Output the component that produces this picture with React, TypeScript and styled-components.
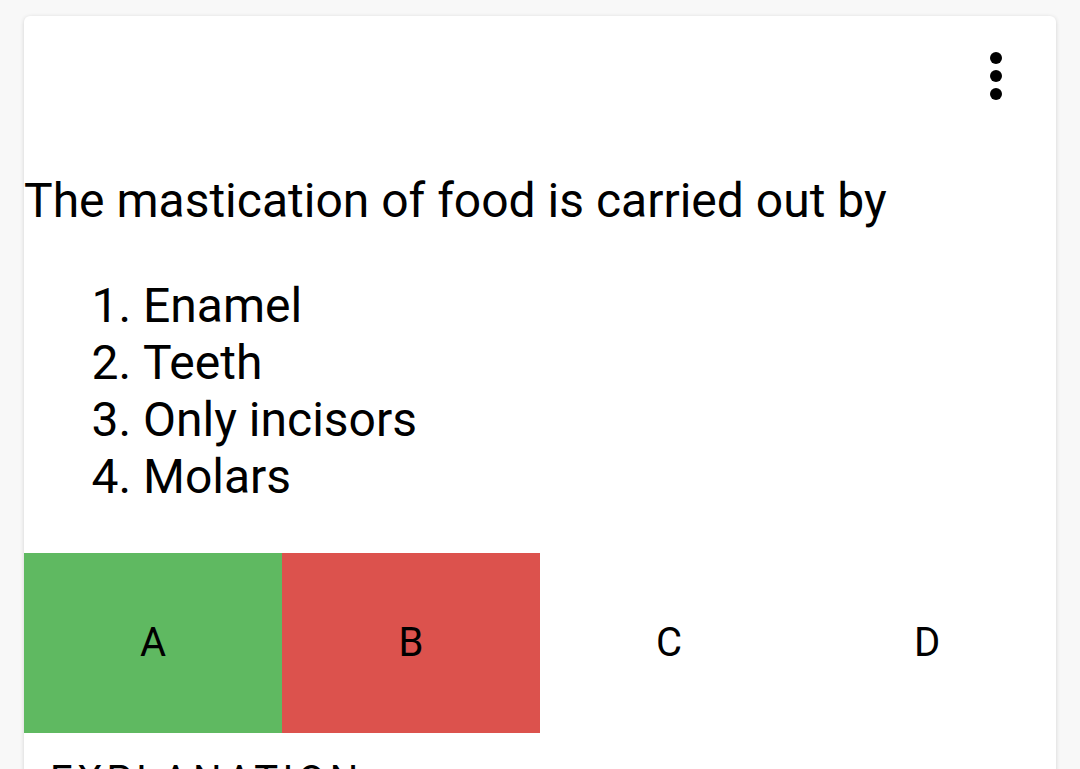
import React from "react";
import styled, { createGlobalStyle } from "styled-components";

const GlobalStyle = createGlobalStyle`
  html, body {
    margin: 0;
    padding: 0;
    background: #f8f8f8;
    font-family: Roboto, "Noto Sans", "Liberation Sans", sans-serif;
    color: #000;
  }
  * { box-sizing: border-box; }
`;

const Page = styled.div`
  padding: 16px 24px 0;
  height: 769px;
  overflow: hidden;
`;

const Card = styled.div`
  background: #fff;
  border-radius: 6px;
  box-shadow: 0 1px 4px rgba(0, 0, 0, 0.16);
  overflow: hidden;
`;

const Header = styled.div`
  display: flex;
  justify-content: flex-end;
  padding: 24px 24px 12px;
`;

const MenuButton = styled.button`
  width: 72px;
  height: 72px;
  padding: 0;
  border: none;
  background: transparent;
  display: flex;
  align-items: center;
  justify-content: center;
`;

const Question = styled.p`
  margin: 48px 0;
  font-size: 48px;
  line-height: 57px;
`;

const Options = styled.ol`
  margin: 0 0 48px;
  padding-left: 119px;
  font-size: 48px;
  line-height: 57px;
`;

const AnswerRow = styled.div`
  display: grid;
  grid-template-columns: repeat(4, 1fr);
  height: 180px;
`;

const Answer = styled.div<{ $state?: "correct" | "wrong" }>`
  display: flex;
  align-items: center;
  justify-content: center;
  font-size: 40px;
  padding-bottom: 2px;
  background: ${(p) =>
    p.$state === "correct" ? "#5fb961" : p.$state === "wrong" ? "#dc524d" : "#fff"};
`;

const Explanation = styled.div`
  padding: 24px 26px;
  font-size: 40px;
  line-height: normal;
  letter-spacing: 0.11em;
  text-transform: uppercase;
`;

const MoreVert = () => (
  <svg width="72" height="72" viewBox="0 0 24 24" aria-hidden="true">
    <circle cx="12" cy="6" r="2" fill="#000" />
    <circle cx="12" cy="12" r="2" fill="#000" />
    <circle cx="12" cy="18" r="2" fill="#000" />
  </svg>
);

const options = ["Enamel", "Teeth", "Only incisors", "Molars"];
const answers: { label: string; state?: "correct" | "wrong" }[] = [
  { label: "A", state: "correct" },
  { label: "B", state: "wrong" },
  { label: "C" },
  { label: "D" },
];

export default function App() {
  return (
    <>
      <GlobalStyle />
      <Page>
        <Card>
          <Header>
            <MenuButton aria-label="More options">
              <MoreVert />
            </MenuButton>
          </Header>
          <Question>The mastication of food is carried out by</Question>
          <Options>
            {options.map((o) => (
              <li key={o}>{o}</li>
            ))}
          </Options>
          <AnswerRow>
            {answers.map((a) => (
              <Answer key={a.label} $state={a.state}>
                {a.label}
              </Answer>
            ))}
          </AnswerRow>
          <Explanation>Explanation</Explanation>
        </Card>
      </Page>
    </>
  );
}
